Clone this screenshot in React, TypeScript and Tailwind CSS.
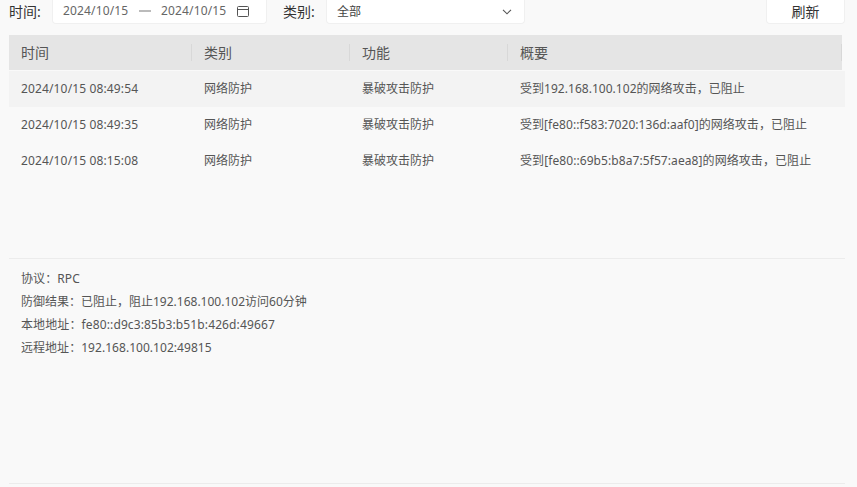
const font = "[font-family:'Noto_Sans','Noto_Sans_CJK_SC',sans-serif]";

const rows = [
  { time: "2024/10/15 08:49:54", type: "网络防护", fn: "暴破攻击防护", summary: "受到192.168.100.102的网络攻击，已阻止", track: "tracking-[0.03px]" },
  { time: "2024/10/15 08:49:35", type: "网络防护", fn: "暴破攻击防护", summary: "受到[fe80::f583:7020:136d:aaf0]的网络攻击，已阻止", track: "tracking-[0.05px]" },
  { time: "2024/10/15 08:15:08", type: "网络防护", fn: "暴破攻击防护", summary: "受到[fe80::69b5:b8a7:5f57:aea8]的网络攻击，已阻止", track: "tracking-[0.08px]" },
];

const details = [
  { text: "协议：RPC", track: "tracking-[0.1px]" },
  { text: "防御结果：已阻止，阻止192.168.100.102访问60分钟", track: "" },
  { text: "本地地址：fe80::d9c3:85b3:b51b:426d:49667", track: "tracking-[0.12px]" },
  { text: "远程地址：192.168.100.102:49815", track: "tracking-[0.04px]" },
];

export default function App() {
  return (
    <div className={`${font} w-[857px] h-[487px] overflow-hidden bg-[#f9f9f9] flex flex-col text-xs text-[#555]`}>
      <div className="flex h-[24px] shrink-0 items-center">
        <span className="ml-[9px] w-[43px] text-sm text-[#333] pb-px">时间:</span>
        <div className="flex h-full w-[215px] items-center rounded-b-[4px] border border-t-0 border-[#f0f0f0] bg-white pl-[10px] pb-px text-[#666]">
          <span className="w-[66px] tracking-[0.15px]">2024/10/15</span>
          <span className="ml-[10px] h-[2px] w-[12px] bg-[#bbb]" />
          <span className="ml-[10px] w-[66px] tracking-[0.15px]">2024/10/15</span>
          <svg className="ml-[10px]" width="12" height="11" viewBox="0 0 12 11" fill="none" stroke="#555" strokeWidth="1">
            <rect x="0.5" y="0.5" width="11" height="10" rx="1" />
            <path d="M0.5 3.5H11.5" />
          </svg>
        </div>
        <span className="ml-[16px] w-[43px] text-sm text-[#333] pb-px">类别:</span>
        <div className="flex h-full w-[199px] items-center justify-between rounded-b-[4px] border border-t-0 border-[#f0f0f0] bg-white pl-[10px] pr-[12px] text-[#444]">
          <span>全部</span>
          <svg width="10" height="6" viewBox="0 0 10 6" fill="none" stroke="#555" strokeWidth="1.1">
            <path d="M1 0.8L5 4.8L9 0.8" />
          </svg>
        </div>
        <div className="ml-[241px] flex h-full w-[79px] items-center justify-center rounded-b-[4px] border border-t-0 border-[#f0f0f0] bg-white text-sm text-[#333]">
          刷新
        </div>
      </div>

      <div className="mx-[9px] mt-[11px] w-[836px]">
        <div className="flex h-[35px] w-[833px] items-center bg-[#e5e5e5] text-sm text-[#555]">
          <div className="flex h-[17px] w-[183px] items-center border-r border-[#d8d8d8] pl-[12px]">时间</div>
          <div className="flex h-[17px] w-[158px] items-center border-r border-[#d8d8d8] pl-[12px]">类别</div>
          <div className="flex h-[17px] w-[158px] items-center border-r border-[#d8d8d8] pl-[12px]">功能</div>
          <div className="flex h-[17px] w-[334px] items-center border-r border-[#d8d8d8] pl-[12px]">概要</div>
        </div>
        <div className="mt-px">
          {rows.map((r, i) => (
            <div key={r.time} className={`flex h-[36px] items-center ${i === 0 ? "bg-[#f3f3f3]" : ""}`}>
              <div className="w-[183px] pl-[12px] tracking-[0.14px]">{r.time}</div>
              <div className="w-[158px] pl-[12px]">{r.type}</div>
              <div className="w-[158px] pl-[12px]">{r.fn}</div>
              <div className={`pl-[12px] ${r.track}`}>{r.summary}</div>
            </div>
          ))}
        </div>
      </div>

      <div className="mx-[9px] mt-[79px] w-[836px] h-[226px] border-y border-[#ececec] pl-[12px] pt-[8px]">
        {details.map((d) => (
          <div key={d.text} className={`h-[23px] leading-[23px] ${d.track}`}>{d.text}</div>
        ))}
      </div>
    </div>
  );
}
